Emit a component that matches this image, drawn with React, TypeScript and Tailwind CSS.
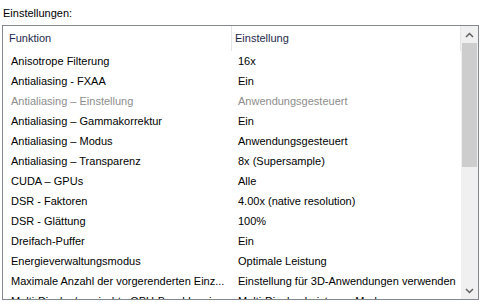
import React from "react";

interface Row {
  name: string;
  value: string;
  disabled?: boolean;
}

const rows: Row[] = [
  { name: "Anisotrope Filterung", value: "16x" },
  { name: "Antialiasing - FXAA", value: "Ein" },
  { name: "Antialiasing – Einstellung", value: "Anwendungsgesteuert", disabled: true },
  { name: "Antialiasing – Gammakorrektur", value: "Ein" },
  { name: "Antialiasing – Modus", value: "Anwendungsgesteuert" },
  { name: "Antialiasing – Transparenz", value: "8x (Supersample)" },
  { name: "CUDA – GPUs", value: "Alle" },
  { name: "DSR - Faktoren", value: "4.00x (native resolution)" },
  { name: "DSR - Glättung", value: "100%" },
  { name: "Dreifach-Puffer", value: "Ein" },
  { name: "Energieverwaltungsmodus", value: "Optimale Leistung" },
  { name: "Maximale Anzahl der vorgerenderten Einz...", value: "Einstellung für 3D-Anwendungen verwenden" },
  { name: "Multi-Display/gemischte GPU-Beschleunigung", value: "Multi-Display-Leistungs-Modus" },
];

const App: React.FC = () => {
  return (
    <div
      className="w-[480px] h-[302px] bg-white text-[11px] text-black overflow-hidden"
      style={{ fontFamily: "'Liberation Sans', Arial, sans-serif" }}
    >
      <div className="h-[25px] pl-[3px] pt-[5px] leading-[16px]">Einstellungen:</div>

      {/* List box */}
      <div className="ml-[2px] w-[477px] h-[275px] border border-[#828790] flex">
        <div className="flex-1 overflow-hidden">
          {/* Header */}
          <div className="flex h-[25px] items-center text-[#1e2a4a]">
            <div className="w-[229px] h-full pl-[6px] flex items-center border-r border-[#e5e5e5]">
              Funktion
            </div>
            <div className="flex-1 h-full pl-[3px] flex items-center border-r border-[#e5e5e5]">
              Einstellung
            </div>
          </div>

          {/* Rows */}
          {rows.map((row) => (
            <div
              key={row.name}
              className={`flex h-[20px] items-center whitespace-nowrap ${
                row.disabled ? "text-[#8d8d8d]" : "text-black"
              }`}
            >
              <div className="w-[229px] pl-[8px] overflow-hidden">{row.name}</div>
              <div className="flex-1 pl-[6px] overflow-hidden">{row.value}</div>
            </div>
          ))}
        </div>

        {/* Scrollbar */}
        <div className="w-[17px] h-full bg-[#f0f0f0] flex flex-col">
          <div className="h-[17px] flex items-center justify-center">
            <svg width="9" height="6" viewBox="0 0 9 6">
              <path d="M1 5 L4.5 1.5 L8 5" fill="none" stroke="#606060" strokeWidth="1.5" />
            </svg>
          </div>
          <div className="mx-[1px] h-[124px] bg-[#cdcdcd]" />
          <div className="flex-1" />
          <div className="h-[17px] flex items-center justify-center">
            <svg width="9" height="6" viewBox="0 0 9 6">
              <path d="M1 1 L4.5 4.5 L8 1" fill="none" stroke="#606060" strokeWidth="1.5" />
            </svg>
          </div>
        </div>
      </div>
    </div>
  );
};

export default App;
